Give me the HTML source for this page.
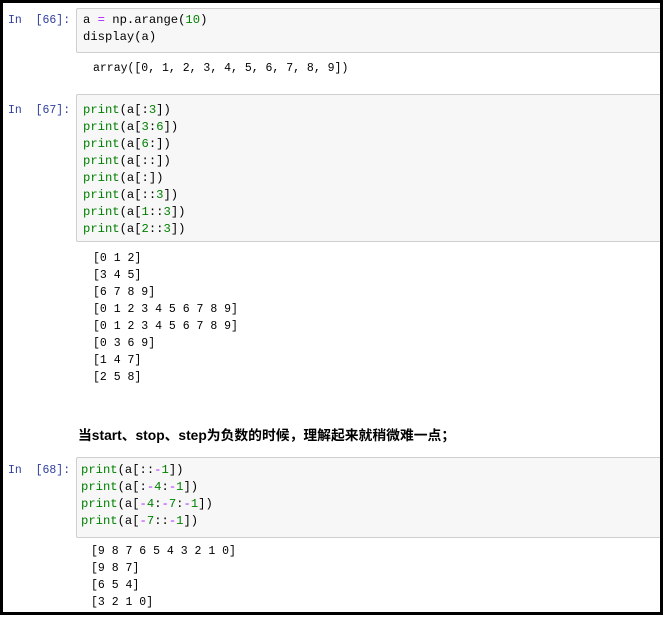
<!DOCTYPE html>
<html><head><style>
body{margin:0;background:#fff;width:668px;height:618px;overflow:hidden;position:relative;font-family:"Liberation Mono",monospace;font-size:12.2px}
.frame{position:absolute;left:0;top:0;width:657px;height:609px;border:3px solid #000;overflow:hidden}
.box{position:absolute;left:73px;width:600px;background:#f7f7f7;border:1px solid #cfcfcf;border-radius:2px}
.l{position:absolute;white-space:pre;line-height:17px}
.out{font-size:11.5px}
.in{position:absolute;left:5px;color:#303f9f;white-space:pre;line-height:17px;font-size:11.5px}
.k{color:#008000}.n{color:#008000}.o{color:#aa22ff}
.md{position:absolute;left:75px;font-family:"Liberation Sans","Noto Sans CJK SC",sans-serif;font-weight:bold;font-size:13.8px;color:#000}
</style></head><body><div class="frame">
<div class="in" style="top:9px">In  [66]:</div>
<div class="box" style="top:5px;height:43px"></div>
<div class="l" style="left:80px;top:9px">a <span class="o">=</span> np.arange(<span class="n">10</span>)
display(a)</div>
<div class="l out" style="left:90px;top:57px">array([0, 1, 2, 3, 4, 5, 6, 7, 8, 9])</div>

<div class="in" style="top:99px">In  [67]:</div>
<div class="box" style="top:91px;height:146px"></div>
<div class="l" style="left:80px;top:99px"><span class="k">print</span>(a[:<span class="n">3</span>])
<span class="k">print</span>(a[<span class="n">3</span>:<span class="n">6</span>])
<span class="k">print</span>(a[<span class="n">6</span>:])
<span class="k">print</span>(a[::])
<span class="k">print</span>(a[:])
<span class="k">print</span>(a[::<span class="n">3</span>])
<span class="k">print</span>(a[<span class="n">1</span>::<span class="n">3</span>])
<span class="k">print</span>(a[<span class="n">2</span>::<span class="n">3</span>])</div>
<div class="l out" style="left:90px;top:247px">[0 1 2]
[3 4 5]
[6 7 8 9]
[0 1 2 3 4 5 6 7 8 9]
[0 1 2 3 4 5 6 7 8 9]
[0 3 6 9]
[1 4 7]
[2 5 8]</div>

<div class="md" style="top:421px">当start、stop、step为负数的时候，理解起来就稍微难一点；</div>

<div class="in" style="top:459px">In  [68]:</div>
<div class="box" style="top:454px;height:79px"></div>
<div class="l" style="left:78px;top:459px"><span class="k">print</span>(a[::<span class="o">-</span><span class="n">1</span>])
<span class="k">print</span>(a[:<span class="o">-</span><span class="n">4</span>:<span class="o">-</span><span class="n">1</span>])
<span class="k">print</span>(a[<span class="o">-</span><span class="n">4</span>:<span class="o">-</span><span class="n">7</span>:<span class="o">-</span><span class="n">1</span>])
<span class="k">print</span>(a[<span class="o">-</span><span class="n">7</span>::<span class="o">-</span><span class="n">1</span>])</div>
<div class="l out" style="left:88px;top:540px">[9 8 7 6 5 4 3 2 1 0]
[9 8 7]
[6 5 4]
[3 2 1 0]</div>
</div></body></html>
